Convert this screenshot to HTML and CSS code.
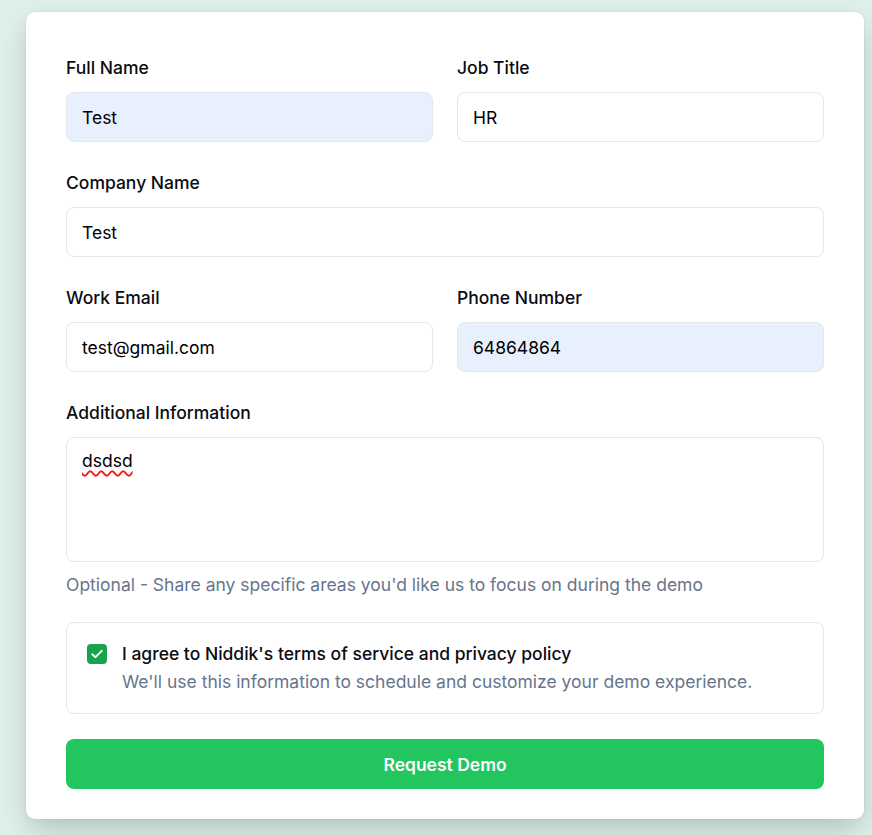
FILE: index.html
```html
<!DOCTYPE html>
<html lang="en">
<head>
<meta charset="utf-8">
<title>Request Demo</title>
<link rel="stylesheet" href="styles.css">
</head>
<body>
<div class="card">
  <form class="form">
    <div class="row two">
      <div class="field">
        <label class="label">Full Name</label>
        <div class="input autofill">Test</div>
      </div>
      <div class="field">
        <label class="label">Job Title</label>
        <div class="input">HR</div>
      </div>
    </div>
    <div class="row">
      <div class="field">
        <label class="label">Company Name</label>
        <div class="input">Test</div>
      </div>
    </div>
    <div class="row two">
      <div class="field">
        <label class="label">Work Email</label>
        <div class="input">test@gmail.com</div>
      </div>
      <div class="field">
        <label class="label">Phone Number</label>
        <div class="input autofill">64864864</div>
      </div>
    </div>
    <div class="row last">
      <div class="field">
        <label class="label">Additional Information</label>
        <div class="textarea"><span class="misspelled">dsdsd</span></div>
        <p class="hint">Optional - Share any specific areas you'd like us to focus on during the demo</p>
      </div>
    </div>
    <div class="agree">
      <span class="check">
        <svg width="16" height="16" viewBox="0 0 16 16"><path d="M3.3 8.2 L6.5 11.2 L12.7 4.8" fill="none" stroke="#fff" stroke-width="1.9" stroke-linecap="round" stroke-linejoin="round"/></svg>
      </span>
      <div class="agree-text">
        <div class="agree-title">I agree to Niddik's terms of service and privacy policy</div>
        <div class="agree-sub">We'll use this information to schedule and customize your demo experience.</div>
      </div>
    </div>
    <button type="button" class="submit">Request Demo</button>
  </form>
</div>
</body>
</html>
```
FILE: styles.css
```css
html, body {
  margin: 0;
  padding: 0;
}
body {
  background: #dfefe9;
  font-family: Inter, "Noto Sans", sans-serif;
  color: #0b0b0f;
  height: 835px;
  overflow: hidden;
}
.card {
  margin: 12px 0 0 26px;
  width: 838px;
  box-sizing: border-box;
  background: #fff;
  border-radius: 9px;
  padding: 44px 40px 30px 40px;
  box-shadow: 0 12px 28px -4px rgba(40, 70, 60, 0.28), 0 0 0 1px rgba(200, 220, 212, 0.4);
}
.form {
  display: flex;
  flex-direction: column;
}
.row {
  display: grid;
  grid-template-columns: 1fr;
  gap: 24px;
  margin-bottom: 29px;
}
.row.two {
  grid-template-columns: 1fr 1fr;
}
.row.last {
  margin-bottom: 25px;
}
.field {
  display: flex;
  flex-direction: column;
}
.label {
  font-size: 17.5px;
  line-height: 24px;
  font-weight: 500;
  margin-bottom: 12px;
  color: #0b0b12;
}
.input {
  height: 50px;
  box-sizing: border-box;
  border: 1px solid #e2e6ef;
  border-radius: 8px;
  padding: 0 15px;
  display: flex;
  align-items: center;
  font-size: 17.5px;
  color: #000;
  background: #fff;
}
.input.autofill {
  background: #e8f0fe;
}
.textarea {
  height: 125px;
  box-sizing: border-box;
  border: 1px solid #e2e6ef;
  border-radius: 8px;
  padding: 11px 15px;
  font-size: 17.5px;
  line-height: 24px;
  color: #000;
}
.misspelled {
  text-decoration: underline wavy #f01c1c;
  text-decoration-thickness: 1.5px;
  text-underline-offset: 3px;
}
.hint {
  margin: 11px 0 0 0;
  font-size: 17.5px;
  line-height: 24px;
  color: #66758b;
}
.agree {
  border: 1px solid #e2e6ef;
  border-radius: 8px;
  padding: 19px 20px 19px 20px;
  display: flex;
  align-items: flex-start;
  gap: 15px;
  margin-bottom: 25px;
}
.check {
  width: 20px;
  height: 20px;
  border-radius: 4px;
  background: #16a34a;
  display: flex;
  align-items: center;
  justify-content: center;
  margin-top: 2px;
  flex-shrink: 0;
}
.check svg {
  display: block;
}
.agree-title {
  font-size: 17.5px;
  line-height: 24px;
  font-weight: 500;
  color: #0b0b12;
}
.agree-sub {
  margin-top: 4px;
  font-size: 17.5px;
  line-height: 24px;
  color: #66758b;
}
.submit {
  height: 50px;
  border: none;
  border-radius: 8px;
  background: #22c55e;
  color: #fff;
  font-family: Inter, "Noto Sans", sans-serif;
  font-size: 17.5px;
  font-weight: 600;
  width: 100%;
  cursor: pointer;
}
```
